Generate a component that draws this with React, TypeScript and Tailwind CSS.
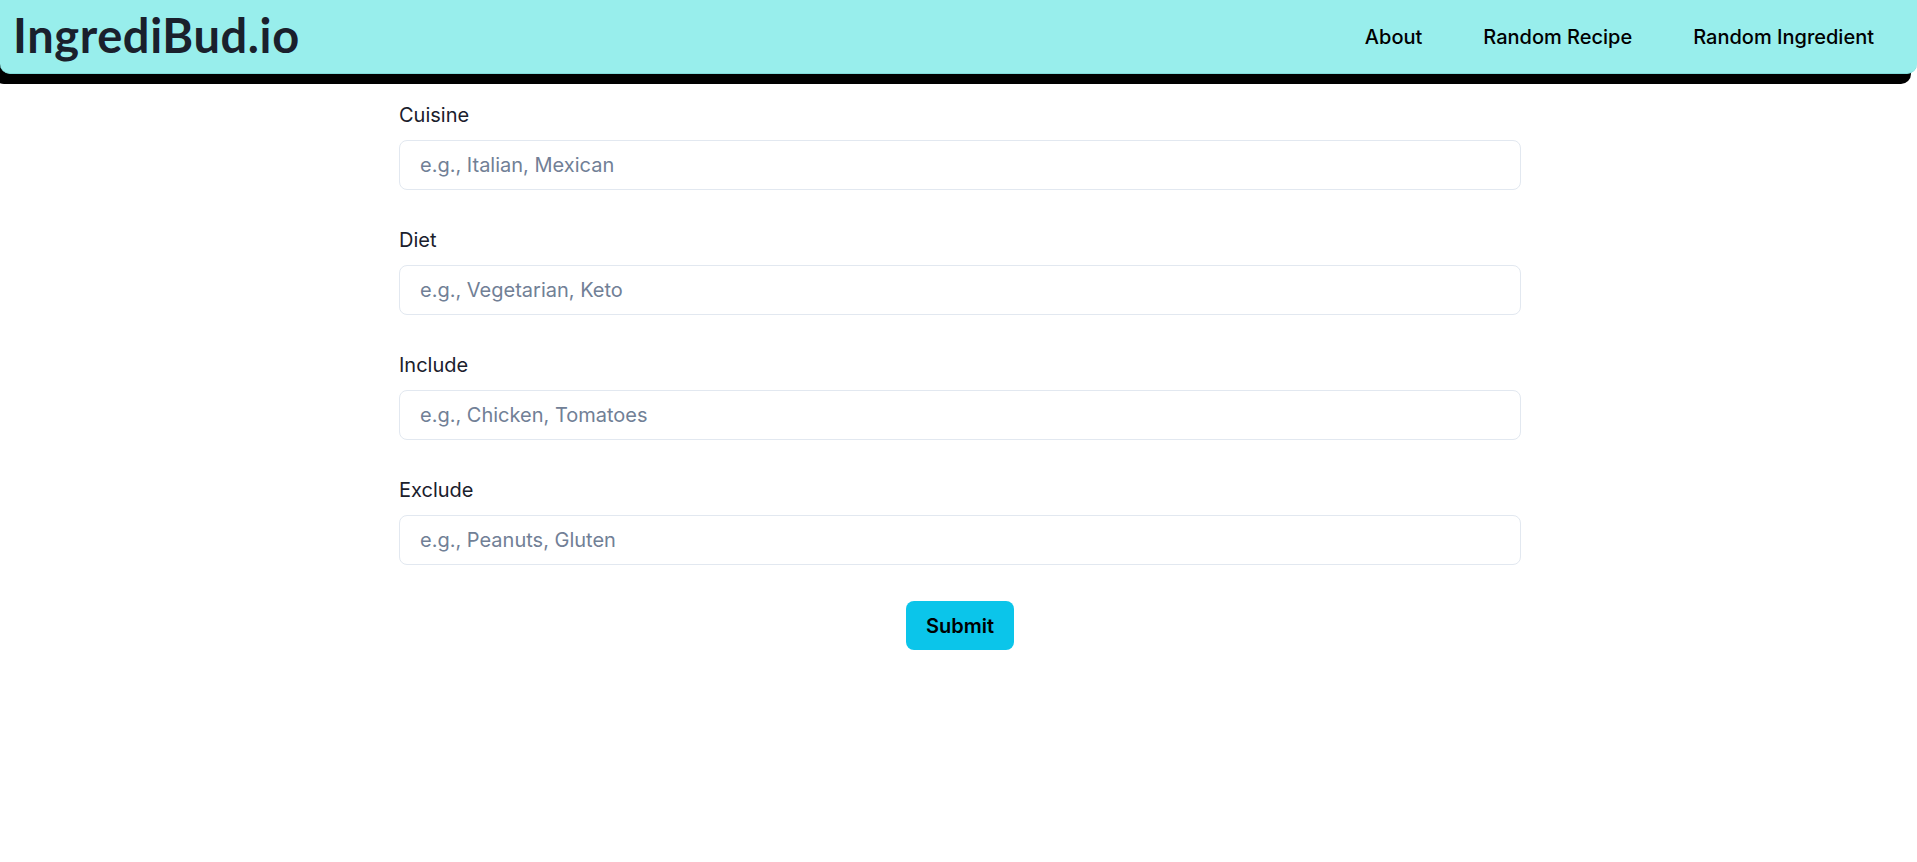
import { useState } from "react";

const fields = [
  { label: "Cuisine", placeholder: "e.g., Italian, Mexican" },
  { label: "Diet", placeholder: "e.g., Vegetarian, Keto" },
  { label: "Include", placeholder: "e.g., Chicken, Tomatoes" },
  { label: "Exclude", placeholder: "e.g., Peanuts, Gluten" },
];

const navLinks = ["About", "Random Recipe", "Random Ingredient"];

export default function App() {
  const [values, setValues] = useState<Record<string, string>>({});

  return (
    <div className="min-h-screen bg-white font-['Inter',sans-serif] text-[#1A202C]">
      {/* Header */}
      <header className="flex items-center justify-between h-[74px] bg-[#98EEEC] border-b border-[#80DCDA] rounded-b-[10px] shadow-[-6px_10px_0_0_#000] pl-[13px] pr-[43px]">
        <a
          href="#"
          className="font-['Lato',sans-serif] font-bold text-[47px] leading-none text-[#1A202C] tracking-[0.6px] pb-[2px]"
        >
          IngrediBud.io
        </a>
        <nav className="flex items-center gap-[61px]">
          {navLinks.map((l) => (
            <a key={l} href="#" className="text-[20px] font-medium text-black">
              {l}
            </a>
          ))}
        </nav>
      </header>

      {/* Form */}
      <div className="pl-[3px]">
        <form
          className="w-[1122px] mx-auto pt-[27px] flex flex-col"
          onSubmit={(e) => e.preventDefault()}
        >
          {fields.map((f) => (
            <div key={f.label} className="mb-[36px]">
              <label className="block text-[20px] leading-[28px] mb-[11px] text-[#1A202C]">
                {f.label}
              </label>
              <input
                type="text"
                value={values[f.label] ?? ""}
                onChange={(e) => setValues({ ...values, [f.label]: e.target.value })}
                placeholder={f.placeholder}
                className="w-full h-[50px] px-[20px] text-[20px] border border-[#E2E8F0] rounded-[8px] outline-none placeholder:text-[#718096]"
              />
            </div>
          ))}
          <div className="flex justify-center">
            <button
              type="submit"
              className="w-[108px] h-[49px] bg-[#0BC5EA] rounded-[8px] text-[20px] font-semibold text-black"
            >
              Submit
            </button>
          </div>
        </form>
      </div>
    </div>
  );
}
